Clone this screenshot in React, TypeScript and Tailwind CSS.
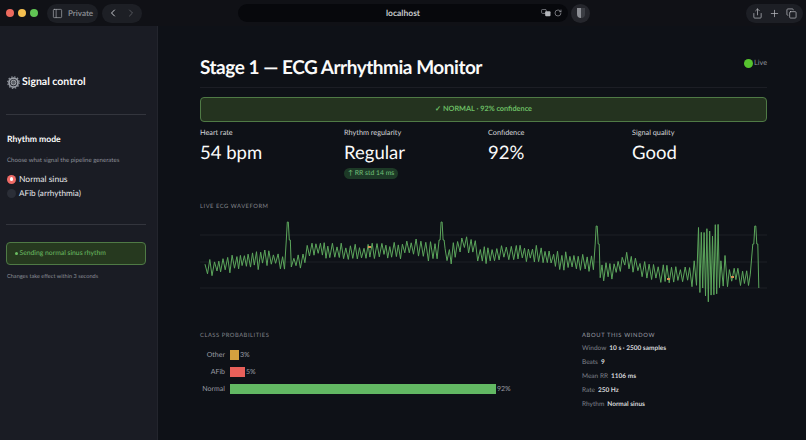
import { ChevronLeft, ChevronRight, Copy, PanelLeft, Plus, RotateCw, Share } from 'lucide-react';
import type { ReactNode } from 'react';

// ─── ECG data ────────────────────────────────────────────────────────────────

// baseline read off the picture: [x, y]
const baseline: [number, number][] = [
  [205, 268], [225, 266], [250, 260], [270, 258], [285, 262], [300, 262], [312, 248], [340, 253],
  [370, 252], [400, 250], [410, 246], [435, 252], [450, 255], [465, 241], [480, 254], [520, 252],
  [560, 260], [590, 262], [605, 272], [620, 266], [626, 258], [640, 268], [660, 273], [680, 275],
  [700, 272], [725, 273], [745, 277], [752, 283],
];

const spikes: [number, number][] = [[288, 222], [441.5, 222], [597, 226], [755, 226]];

function baseAt(x: number) {
  for (let i = 1; i < baseline.length; i++) {
    const [x0, y0] = baseline[i - 1];
    const [x1, y1] = baseline[i];
    if (x <= x1) return y0 + ((y1 - y0) * (x - x0)) / (x1 - x0);
  }
  return 283;
}

function buildWave() {
  let seed = 17;
  const rnd = () => {
    seed = (seed * 16807) % 2147483647;
    return seed / 2147483647;
  };
  const pts: string[] = [];
  let up = true;
  let x = 205;
  while (x <= 760) {
    const inBurst = x > 697 && x < 720;
    const amp = x > 690 && x < 728 ? 17 : x > 660 ? 6 + rnd() * 3 : 5 + rnd() * 5;
    let y = baseAt(x) + (up ? -amp : amp) * (0.65 + rnd() * 0.45);
    if (inBurst) y = up ? 222 + rnd() * 16 : 302 - rnd() * 16;
    let onSpike = false;
    for (const [sx, sy] of spikes) {
      const d = Math.abs(x - sx);
      if (d <= 1.2) y = sy;
      else if (d <= 3.2) y = sy + 18;
      if (d <= 3.2) onSpike = true;
    }
    if (x >= 758) y = 288;
    pts.push(`${(x - 200).toFixed(1)},${Math.max(0, y - 220).toFixed(1)}`);
    up = !up;
    x += onSpike ? 1 : inBurst ? 1.4 : 1.7 + rnd() * 0.9;
  }
  return pts.join(' ');
}

const wave = buildWave();

const probs = [
  { label: 'Other', value: '3%', barClass: 'w-[9px] bg-[#d4a13f]' },
  { label: 'AFib', value: '5%', barClass: 'w-[15px] bg-[#e8605a]' },
  { label: 'Normal', value: '92%', barClass: 'w-[266px] bg-[#62b863]' },
];

const about = [
  ['Window', '10 s · 2500 samples'],
  ['Beats', '9'],
  ['Mean RR', '1106 ms'],
  ['Rate', '250 Hz'],
  ['Rhythm', 'Normal sinus'],
];

// ─── Pieces ──────────────────────────────────────────────────────────────────

function GearIcon() {
  return (
    <svg viewBox="0 0 26 26" className="w-[13px] h-[13px] shrink-0">
      <circle cx="13" cy="13" r="9" fill="none" stroke="#9a9ea6" strokeWidth="3.5" />
      <circle cx="13" cy="13" r="11.5" fill="none" stroke="#8b8f97" strokeWidth="2.6" strokeDasharray="3 3" />
      <circle cx="13" cy="13" r="5" fill="#5b5f66" stroke="#c4c7cc" strokeWidth="1.5" />
    </svg>
  );
}

function TranslateIcon() {
  return (
    <svg viewBox="0 0 16 12" className="w-[11px] h-[8px]">
      <rect x="0.6" y="0.6" width="7" height="6" rx="1.5" fill="none" stroke="#a3a5aa" strokeWidth="1" />
      <rect x="6" y="3.5" width="8" height="7.5" rx="1.5" fill="#b4b6bb" />
    </svg>
  );
}

function BrowserBar() {
  return (
    <div className="h-[26px] shrink-0 bg-[#101116] flex items-center pl-[6px] pr-[3px]">
      <div className="flex gap-[4.5px] items-center w-[41px]">
        <span className="w-[7.5px] h-[7.5px] rounded-full bg-[#ec6a5e]" />
        <span className="w-[7.5px] h-[7.5px] rounded-full bg-[#f4bf4f]" />
        <span className="w-[7.5px] h-[7.5px] rounded-full bg-[#61c554]" />
      </div>
      <div className="h-[19px] w-[51px] rounded-full bg-[#1d1f25] flex items-center justify-center gap-[5px] text-[8px] font-bold text-[#85878d]">
        <PanelLeft className="w-[11px] h-[11px] text-[#a8aab0]" strokeWidth={1.5} />
        Private
      </div>
      <div className="h-[19px] w-[40px] ml-[4px] rounded-full bg-[#1d1f25] flex items-center justify-around px-[2px]">
        <ChevronLeft className="w-[12px] h-[12px] text-[#c8cacf]" strokeWidth={2} />
        <ChevronRight className="w-[12px] h-[12px] text-[#55575d]" strokeWidth={2} />
      </div>
      <div className="h-[18px] w-[330px] ml-[96px] rounded-full bg-[#07080c] relative flex items-center justify-center text-[8.5px] font-bold text-[#c6c7ca]">
        localhost
        <div className="absolute right-[6px] top-0 h-full flex items-center gap-[2px]">
          <TranslateIcon />
          <RotateCw className="w-[8px] h-[8px] text-[#a3a5aa]" strokeWidth={2} />
        </div>
      </div>
      <div className="w-[19px] h-[19px] ml-[3px] rounded-full bg-[#25262c] flex items-center justify-center">
        <span className="w-[8px] h-[10px] rounded-b-full rounded-t-[2px] bg-[linear-gradient(90deg,#8c8e94_50%,#3c3e44_50%)]" />
      </div>
      <div className="ml-auto h-[19px] w-[57px] rounded-full bg-[#1d1f25] flex items-center justify-around px-[3px] text-[#c0c2c7]">
        <Share className="w-[11px] h-[11px]" strokeWidth={1.5} />
        <Plus className="w-[11px] h-[11px]" strokeWidth={1.5} />
        <Copy className="w-[11px] h-[11px]" strokeWidth={1.5} />
      </div>
    </div>
  );
}

function Sidebar() {
  return (
    <aside className="w-[158px] shrink-0 bg-[#1a1c24] border-r border-[#23252d] pl-[6px] pr-[11px] text-[#fafafa]">
      <div className="h-[89px] border-b border-[#33353d] flex items-center gap-[2px] pt-[25px] pl-[1px] text-[10.5px] font-bold">
        <GearIcon />
        Signal control
      </div>
      <div className="mt-[18px] pl-[1px] text-[8.6px] font-bold leading-[13px]">Rhythm mode</div>
      <div className="mt-[10px] pl-[1px] text-[6.1px] leading-[9px] text-[#8d9099]">Choose what signal the pipeline generates</div>
      <div className="mt-[7px] pl-[1px] flex items-center gap-[3px] h-[14px] text-[8.5px] text-[#e6e7ea]">
        <span className="w-[9px] h-[9px] rounded-full bg-[#ee6a66] flex items-center justify-center">
          <span className="w-[3.5px] h-[3.5px] rounded-full bg-white" />
        </span>
        Normal sinus
      </div>
      <div className="pl-[1px] flex items-center gap-[3px] h-[14px] text-[8.2px] text-[#e6e7ea]">
        <span className="w-[9px] h-[9px] rounded-full bg-[#2b2e37]" />
        AFib (arrhythmia)
      </div>
      <div className="mt-[24px] border-t border-[#33353d]" />
      <div className="mt-[17px] h-[23px] rounded-[4px] bg-[#26391f] border border-[#4f7a45] flex items-center gap-[2px] px-[8px] text-[6.8px] text-[#6bbd63]">
        <span className="w-[2.5px] h-[2.5px] rounded-full bg-[#6bbd63]" />
        Sending normal sinus rhythm
      </div>
      <div className="mt-[7px] pl-[1px] text-[5.6px] leading-[9px] text-[#8d9099]">Changes take effect within 3 seconds</div>
    </aside>
  );
}

function Metric({ label, value, children }: { label: string; value: string; children?: ReactNode }) {
  return (
    <div className="w-[144px] shrink-0">
      <div className="text-[7.3px] leading-[10px] text-[#d6d7da]">{label}</div>
      <div className="mt-[1px] text-[18.5px] leading-[26px] text-[#fafafa]">{value}</div>
      {children}
    </div>
  );
}

function Waveform() {
  return (
    <svg viewBox="0 0 567 84" className="mt-[9px] w-[567px] h-[84px] block">
      {[15, 42, 68].map((y) => (
        <line key={y} x1="0" x2="567" y1={y} y2={y} stroke="#1d2026" strokeWidth="1" />
      ))}
      <polyline points={wave} fill="none" stroke="#5ca65c" strokeWidth="1" strokeLinejoin="round" />
      <rect x="168" y="26" width="3" height="2" fill="#d98f55" />
      <rect x="467" y="58" width="3" height="2" fill="#d98f55" />
      <rect x="531" y="56" width="3" height="2" fill="#d98f55" />
    </svg>
  );
}

// ─── App ─────────────────────────────────────────────────────────────────────

export default function App() {
  return (
    <div className="w-[806px] h-[440px] overflow-hidden flex flex-col bg-[#0e1117] font-['Lato',sans-serif] [text-rendering:geometricPrecision]">
      <BrowserBar />
      <div className="flex flex-1 min-h-0">
        <Sidebar />
        <main className="flex-1 min-w-0 pl-[42px] pr-[39px]">
          <div className="h-[62px] border-b border-[#1c1e25] flex items-start justify-between">
            <h1 className="mt-[28px] text-[19px] leading-[27px] tracking-[-0.025em] font-bold text-[#fafafa]">
              Stage 1 — ECG Arrhythmia Monitor
            </h1>
            <div className="mt-[32px] flex items-center gap-[1px] text-[7.3px] text-[#8d9099]">
              <span className="w-[8.5px] h-[8.5px] rounded-full bg-[#56c22f]" />
              Live
            </div>
          </div>
          <div className="mt-[9px] h-[25px] rounded-[4px] bg-[#24331f] border border-[#4f7a45] flex items-center justify-center text-[7.3px] font-bold text-[#6bbd63]">
            ✓ NORMAL · 92% confidence
          </div>
          <div className="mt-[6px] flex">
            <Metric label="Heart rate" value="54 bpm" />
            <Metric label="Rhythm regularity" value="Regular">
              <span className="mt-[3px] flex w-fit items-center h-[11px] px-[4px] rounded-full bg-[#1d3a27] text-[6.8px] text-[#72c17a]">
                ↑ RR std 14 ms
              </span>
            </Metric>
            <Metric label="Confidence" value="92%" />
            <Metric label="Signal quality" value="Good" />
          </div>
          <div className="mt-[24px] text-[5.8px] leading-[8px] tracking-[0.09em] text-[#82858c]">LIVE ECG WAVEFORM</div>
          <Waveform />
          <div className="mt-[28px] flex">
            <section className="w-[382px]">
              <div className="text-[5.8px] leading-[8px] tracking-[0.09em] text-[#82858c]">CLASS PROBABILITIES</div>
              <div className="mt-[10px] flex flex-col gap-[7px]">
                {probs.map((p) => (
                  <div key={p.label} className="flex items-center h-[10px] text-[7px] text-[#9a9da4]">
                    <span className="w-[25px] text-right">{p.label}</span>
                    <span className={`ml-[5px] h-full ${p.barClass}`} />
                    <span className="ml-[1px]">{p.value}</span>
                  </div>
                ))}
              </div>
            </section>
            <section>
              <div className="text-[5.8px] leading-[8px] tracking-[0.11em] text-[#9a9da4]">ABOUT THIS WINDOW</div>
              <div className="mt-[2px] flex flex-col">
                {about.map(([k, v]) => (
                  <div key={k} className="h-[14px] flex items-center gap-[3px] text-[6.5px]">
                    <span className="text-[#7f828a]">{k}</span>
                    <span className="text-[#d6d7da] font-bold">{v}</span>
                  </div>
                ))}
              </div>
            </section>
          </div>
        </main>
      </div>
    </div>
  );
}
